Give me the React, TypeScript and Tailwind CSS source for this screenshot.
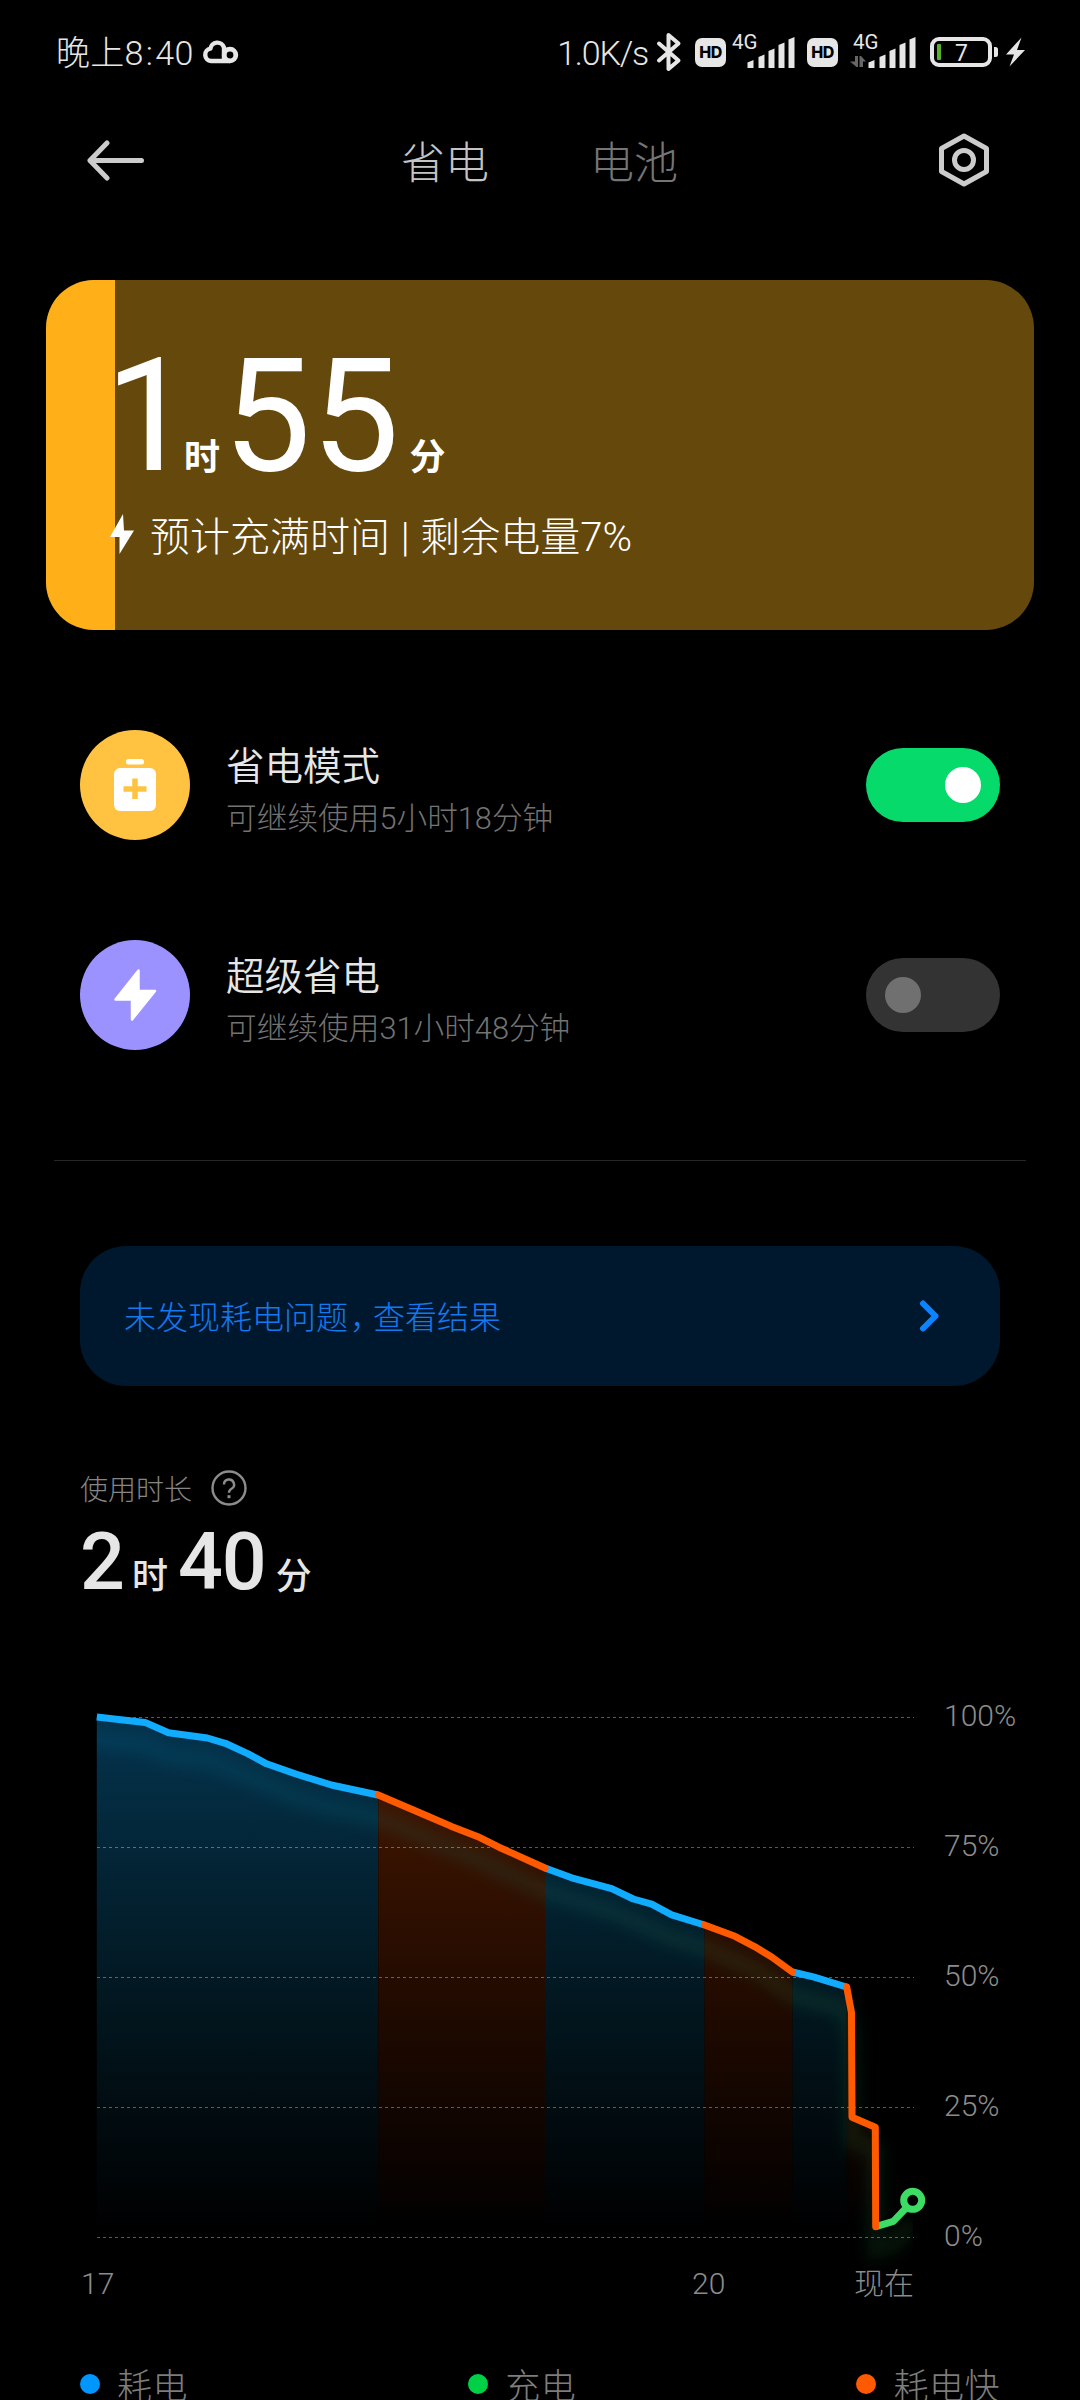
import type { ReactNode } from 'react';

type Kind = 'drain' | 'fast' | 'charge';

interface Segment {
  kind: Kind;
  points: [number, number][];
}

const LINE_COLORS: Record<Kind, string> = {
  drain: '#12acff',
  fast: '#ff5a00',
  charge: '#3ddc64',
};

const SEGMENTS: Segment[] = [
  {
    kind: 'drain',
    points: [[96.8, 1717], [145, 1722.4], [168.5, 1732.8], [207.4, 1738], [225.3, 1743.3], [247.7, 1753.6], [266.6, 1763.8], [295.9, 1774], [331.4, 1785], [378, 1795]],
  },
  {
    kind: 'drain',
    points: [[545, 1868], [571.7, 1877.8], [611.7, 1888.6], [633.3, 1899], [651.7, 1904.2], [671.7, 1914.8], [704.5, 1925]],
  },
  {
    kind: 'drain',
    points: [[792.5, 1972], [813.3, 1976.8], [846.5, 1987]],
  },
  {
    kind: 'charge',
    points: [[875.7, 2226.7], [893.3, 2221.3], [907, 2207]],
  },
  {
    kind: 'fast',
    points: [[378.3, 1795], [426.8, 1815.8], [451.5, 1826.4], [477.4, 1836.4], [499, 1847.2], [545, 1868]],
  },
  {
    kind: 'fast',
    points: [[704.5, 1925], [735, 1936.3], [755, 1946.8], [771.7, 1957], [792.3, 1972]],
  },
  {
    kind: 'fast',
    points: [[846.7, 1987], [851.5, 2012.7], [852, 2117.3], [875.3, 2127.3], [875.7, 2226.7]],
  },
];

const GLOW =
  'M80 1717 L96.8 1717 L145 1722.4 L168.5 1732.8 L207.4 1738 L247.7 1753.6 L295.9 1774 L331.4 1785 L378 1795 L426.8 1815.8 L477.4 1836.4 L545 1868 L611.7 1888.6 L671.7 1914.8 L704.5 1925 L755 1946.8 L792.3 1972 L846.5 1987 L851.5 2012.7 L852 2117.3 L875.3 2127.3 L875.7 2226.7 L893.3 2221.3 L912 2200';

const GRID_LINES = [
  { y: 1717.5, label: '100%' },
  { y: 1847.5, label: '75%' },
  { y: 1977.5, label: '50%' },
  { y: 2107.5, label: '25%' },
  { y: 2237.5, label: '0%' },
];

const toPath = (points: [number, number][]) => 'M' + points.map((p) => p.join(' ')).join(' L');

const toArea = (points: [number, number][]) =>
  `${toPath(points)} L${points[points.length - 1][0]} 2237 L${points[0][0]} 2237 Z`;

function CloudIcon() {
  return (
    <svg className="-mt-[3px] ml-[8px] h-[26px] w-[38px]" viewBox="0 0 38 26" fill="none" stroke="#e6e6e6" strokeWidth="4.400">
      <path d="M28 23H9a6.200 6.200 0 0 1-.6-12.300A7 7 0 0 1 22 9.500V23" strokeLinejoin="round" />
      <circle cx="28" cy="17" r="5.800" strokeWidth="4.800" />
    </svg>
  );
}

function BluetoothIcon() {
  return (
    <svg className="ml-[8px] h-[40px] w-[26px]" viewBox="0 0 26 40" fill="none" stroke="#e6e6e6" strokeWidth="4" strokeLinejoin="round" strokeLinecap="round">
      <path d="M3 11.500 L22.500 28.500 L12.500 37 V3 L22.500 11.500 L3 28.500" />
    </svg>
  );
}

function HdBadge({ className }: { className: string }) {
  return (
    <span className={`flex h-[29px] w-[31px] items-center justify-center rounded-[7px] bg-[#e6e6e6] font-[Inter] text-[16px] font-extrabold tracking-[-0.5px] text-black ${className}`}>
      HD
    </span>
  );
}

function Signal({ transfer }: { transfer?: boolean }) {
  return (
    <svg className="h-[40px] w-[68px] overflow-visible" viewBox="0 0 68 40">
      <text x="4" y="16.500" fontSize="20.500" fill="#e6e6e6">
        4G
      </text>
      {transfer && (
        <path fill="#666" d="M6 24h3v11H7.500L1 29.500h5zM10.500 24H12l5 5.500h-3V35h-3.500z" />
      )}
      <g fill="#e6e6e6">
        <path d="M19.500 30.500 L25.500 28v8h-6z" />
        <path d="M30.500 25 L36.500 22.500V36h-6z" />
        <path d="M40.500 19 L46.500 16.500V36h-6z" />
        <path d="M50.500 13 L56.500 10.500V36h-6z" />
        <path d="M60.500 7.500 L66.500 5v31h-6z" />
      </g>
    </svg>
  );
}

function BatteryIcon() {
  return (
    <svg className="ml-[13px] h-[40px] w-[96px]" viewBox="0 0 96 40">
      <rect x="2" y="7" width="58" height="26" rx="7" fill="none" stroke="#e6e6e6" strokeWidth="4" />
      <rect x="7" y="12" width="4" height="16" rx="1" fill="#58b22a" />
      <path d="M64 15h1.500a2.500 2.500 0 0 1 2.500 2.500v5a2.500 2.500 0 0 1-2.500 2.500H64z" fill="#e6e6e6" />
      <text x="31.500" y="28.500" fontSize="23" textAnchor="middle" fill="#e6e6e6">
        7
      </text>
      <path d="M91.500 5.500 L76 22.500h8L79.500 34.500 L95 18h-8z" fill="#e6e6e6" />
    </svg>
  );
}

function StatusBar() {
  return (
    <div className="flex h-[104px] shrink-0 items-center justify-between pr-[54px] pl-[56px] font-[Roboto,'Noto_Sans_CJK_SC',sans-serif] text-[#e6e6e6]">
      <div className="flex items-center">
        <span className="pt-[2px] text-[34px] leading-[48px] font-light tracking-[0.3px]">
          晚上8<span className="mx-[2px]">:</span>40
        </span>
        <CloudIcon />
      </div>
      <div className="flex items-center">
        <span className="pt-[2px] text-[34px] leading-[48px] font-light tracking-[-1.2px]">1.0K/s</span>
        <BluetoothIcon />
        <HdBadge className="ml-[13px]" />
        <span className="ml-[2px] flex">
          <Signal />
        </span>
        <HdBadge className="ml-[11px]" />
        <span className="ml-[11px] flex">
          <Signal transfer />
        </span>
        <BatteryIcon />
      </div>
    </div>
  );
}

function Header() {
  return (
    <header className="flex h-[112px] shrink-0 items-center pr-[90px] pl-[86px]">
      <svg className="h-[42px] w-[60px]" viewBox="0 0 60 42" fill="none" stroke="#ccc" strokeWidth="5" strokeLinecap="round" strokeLinejoin="round">
        <path d="M55.500 21.500H4M21 4L4 21.500 21 39" />
      </svg>
      <nav className="ml-[255px] flex gap-[101px] text-[44px] leading-[60px] font-light">
        <span className="text-[#c4c4c4]">省电</span>
        <span className="text-[#757575]">电池</span>
      </nav>
      <svg className="ml-auto h-[56px] w-[52px]" viewBox="0 0 52 56" fill="none" stroke="#ccc" strokeWidth="5" strokeLinejoin="round">
        <path d="M26 4 L48.500 16.500V39.500L26 52 3.500 39.500V16.500Z" />
        <circle cx="26" cy="28" r="9.500" />
      </svg>
    </header>
  );
}

function ChargeCard() {
  return (
    <section className="relative mx-[46px] mt-[64px] h-[350px] shrink-0 overflow-hidden rounded-[48px] bg-[#65480c] font-[Roboto,'Noto_Sans_CJK_SC',sans-serif] text-white">
      <div className="absolute inset-y-0 left-0 w-[7%] bg-[#ffaf17]" />
      <div className="relative pt-[61px] pl-[59px]">
        <div className="flex h-[150px] items-baseline">
          <span className="w-[79px] text-[157px] leading-[150px]">1</span>
          <span className="font-['Noto_Sans_CJK_SC',sans-serif] text-[36px] leading-[50px] font-bold">时</span>
          <span className="ml-[3px] text-[157px] leading-[150px]">55</span>
          <span className="ml-[10px] font-['Noto_Sans_CJK_SC',sans-serif] text-[36px] leading-[50px] font-bold">分</span>
        </div>
        <div className="mt-[13px] flex h-[60px] items-center">
          <svg className="ml-[5px] h-[40px] w-[24px]" viewBox="0 0 24 40" fill="#fff">
            <path d="M13 0 L0 23h9.500V40L24 16.500h-10z" />
          </svg>
          <span className="ml-[16px] pt-[8px] text-[40px] leading-[60px] font-light">
            预计充满时间<span className="mx-[1px]"> | </span>剩余电量7%
          </span>
        </div>
      </div>
    </section>
  );
}

function Toggle({ on }: { on: boolean }) {
  return on ? (
    <span className="flex h-[74px] w-[134px] items-center justify-end rounded-full bg-[#05da6a] px-[19px]">
      <span className="size-[36px] rounded-full bg-white" />
    </span>
  ) : (
    <span className="flex h-[74px] w-[134px] items-center rounded-full bg-[#333] px-[19px]">
      <span className="size-[36px] rounded-full bg-[#707070]" />
    </span>
  );
}

function ModeRow({ icon, title, subtitle, on }: { icon: ReactNode; title: string; subtitle: string; on: boolean }) {
  return (
    <div className="mt-[100px] flex h-[110px] shrink-0 items-center px-[80px]">
      {icon}
      <div className="ml-[36px] flex flex-col pt-[8px]">
        <span className="text-[38.500px] leading-[56px] font-[350] text-[#e6e6e6]">{title}</span>
        <span className="mt-[4px] font-[Roboto,'Noto_Sans_CJK_SC',sans-serif] text-[30.700px] leading-[48px] font-light text-[#737373]">
          {subtitle}
        </span>
      </div>
      <div className="ml-auto">
        <Toggle on={on} />
      </div>
    </div>
  );
}

function UsageChart() {
  return (
    <svg
      className="mt-[93px] h-[616px] w-[1080px] shrink-0 font-[Roboto,'Noto_Sans_CJK_SC',sans-serif] font-light"
      viewBox="0 1694 1080 616"
      fontSize="30"
    >
      <defs>
        <linearGradient id="drain" gradientUnits="userSpaceOnUse" x1="0" y1="1717" x2="0" y2="2230">
          <stop offset="0" stopColor="#04334d" />
          <stop offset="0.550" stopColor="#021720" />
          <stop offset="1" stopColor="#000" />
        </linearGradient>
        <linearGradient id="fast" gradientUnits="userSpaceOnUse" x1="0" y1="1790" x2="0" y2="2230">
          <stop offset="0" stopColor="#3f1500" />
          <stop offset="0.500" stopColor="#200a00" />
          <stop offset="1" stopColor="#000" />
        </linearGradient>
        <linearGradient id="glow" gradientUnits="userSpaceOnUse" x1="97" y1="0" x2="913" y2="0">
          <stop offset="0" stopColor="#12a0e0" stopOpacity="0.090" />
          <stop offset="1" stopColor="#3ddc64" stopOpacity="0.090" />
        </linearGradient>
        <filter id="soft" filterUnits="userSpaceOnUse" x="60" y="1694" width="900" height="616">
          <feGaussianBlur stdDeviation="7" />
        </filter>
        <clipPath id="plot">
          <rect x="96.800" y="1694" width="816" height="616" />
        </clipPath>
      </defs>

      {SEGMENTS.filter((s) => s.kind !== 'charge').map((s, i) => (
        <path key={i} d={toArea(s.points)} fill={s.kind === 'drain' ? 'url(#drain)' : 'url(#fast)'} />
      ))}
      <g clipPath="url(#plot)">
        <path d={GLOW} transform="translate(0 23)" fill="none" stroke="url(#glow)" strokeWidth="18" filter="url(#soft)" />
      </g>

      {GRID_LINES.map((line) => (
        <g key={line.label}>
          <path d={`M97 ${line.y}H914`} stroke="#fff" strokeOpacity="0.350" strokeDasharray="3 3" />
          <text x="944" y={line.y + 8.5} fill="#8c8c8c">
            {line.label}
          </text>
        </g>
      ))}

      {SEGMENTS.map((s, i) => (
        <path
          key={i}
          d={toPath(s.points)}
          fill="none"
          stroke={LINE_COLORS[s.kind]}
          strokeWidth="7"
          strokeLinejoin="round"
          strokeLinecap={s.kind === 'fast' ? 'round' : 'butt'}
        />
      ))}
      <circle cx="912.700" cy="2200.300" r="9" fill="#000" stroke="#3ddc64" strokeWidth="7" />

      <g fill="#8c8c8c">
        <text x="81" y="2294">17</text>
        <text x="692" y="2294">20</text>
        <text x="854" y="2294">现在</text>
      </g>
    </svg>
  );
}

function LegendItem({ dot, label }: { dot: string; label: string }) {
  return (
    <div className="flex items-center">
      <span className={`size-[20px] rounded-full ${dot}`} />
      <span className="ml-[17px] text-[35px] leading-[40px] font-light tracking-[0.5px] text-[#7d7d7d]">{label}</span>
    </div>
  );
}

function App() {
  return (
    <div className="flex h-[2400px] w-[1080px] flex-col overflow-hidden bg-black font-['Noto_Sans_CJK_SC',sans-serif] whitespace-nowrap">
      <StatusBar />
      <Header />
      <ChargeCard />

      <ModeRow
        title="省电模式"
        subtitle="可继续使用5小时18分钟"
        on={true}
        icon={
          <svg className="size-[110px]" viewBox="0 0 110 110">
            <circle cx="55" cy="55" r="55" fill="#ffc341" />
            <rect x="46" y="29" width="18" height="5.500" rx="2.500" fill="#fff" />
            <rect x="34" y="38" width="42" height="43" rx="6" fill="#fff" />
            <path d="M55 48.500v20.500M43.500 59h23" stroke="#ffc341" strokeWidth="5.500" />
          </svg>
        }
      />
      <ModeRow
        title="超级省电"
        subtitle="可继续使用31小时48分钟"
        on={false}
        icon={
          <svg className="size-[110px]" viewBox="0 0 110 110">
            <circle cx="55" cy="55" r="55" fill="#9c92ff" />
            <path d="M58.500 30.500V51H75L52 79.500V59.500H35.500Z" fill="#fff" stroke="#fff" strokeWidth="2.500" strokeLinejoin="round" />
          </svg>
        }
      />

      <div className="mx-[54px] mt-[110px] h-px shrink-0 bg-[#262626]" />

      <div className="mx-[80px] mt-[85px] flex h-[140px] shrink-0 items-center rounded-[46px] bg-[#00182d] pr-[61px] pl-[44px]">
        <span className="pb-[2px] text-[32px] leading-[48px] font-light text-[#1478f0]">
          未发现耗电问题<span className="ml-[2px] tracking-[-9px]">，</span>查看结果
        </span>
        <svg className="ml-auto h-[32px] w-[20px]" viewBox="0 0 20 32" fill="none" stroke="#0d84ff" strokeWidth="6" strokeLinecap="round" strokeLinejoin="round">
          <path d="M4 3.500L16.500 16 4 28.500" />
        </svg>
      </div>

      <div className="mt-[84px] flex h-[36px] shrink-0 items-center pl-[80px]">
        <span className="text-[28px] leading-[36px] font-light text-[#858585]">使用时长</span>
        <svg className="ml-[19px] size-[36px]" viewBox="0 0 36 36" fill="none" stroke="#8c8c8c" strokeWidth="2.400">
          <circle cx="18" cy="18" r="16.500" />
          <path d="M13 14.500a5 5 0 1 1 7.500 4.300c-1.700 1-2.500 1.800-2.500 4" />
          <path d="M18 25.200v3" strokeWidth="3" />
        </svg>
      </div>
      <div className="mt-[17px] flex h-[78px] shrink-0 items-baseline pl-[80px] font-medium text-[#e6e6e6]">
        <span className="font-[Roboto] text-[79px] leading-[78px] tracking-[-1px]">2</span>
        <span className="ml-[8px] text-[36px] leading-[50px]">时</span>
        <span className="ml-[10px] font-[Roboto] text-[79px] leading-[78px] tracking-[-1px]">40</span>
        <span className="ml-[10px] text-[36px] leading-[50px]">分</span>
      </div>

      <UsageChart />

      <div className="mt-[54px] flex h-[40px] shrink-0 items-center justify-between px-[80px]">
        <LegendItem dot="bg-[#0096ff]" label="耗电" />
        <LegendItem dot="bg-[#00d046]" label="充电" />
        <LegendItem dot="bg-[#ff5a00]" label="耗电快" />
      </div>
    </div>
  );
}

export default App;
